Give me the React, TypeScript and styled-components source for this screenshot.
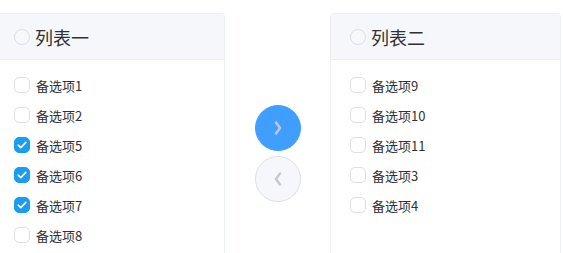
import styled, { createGlobalStyle } from "styled-components";

const GlobalStyle = createGlobalStyle`
  html, body {
    margin: 0;
    padding: 0;
    background: #ffffff;
    overflow: hidden;
  }
  body {
    font-family: "Noto Sans CJK SC", "Noto Sans", sans-serif;
  }
`;

const leftItems = [
  { label: "备选项1", checked: false },
  { label: "备选项2", checked: false },
  { label: "备选项5", checked: true },
  { label: "备选项6", checked: true },
  { label: "备选项7", checked: true },
  { label: "备选项8", checked: false },
];

const rightItems = [
  { label: "备选项9", checked: false },
  { label: "备选项10", checked: false },
  { label: "备选项11", checked: false },
  { label: "备选项3", checked: false },
  { label: "备选项4", checked: false },
];

function Panel({
  title,
  items,
}: {
  title: string;
  items: { label: string; checked: boolean }[];
}) {
  return (
    <StyledPanel>
      <StyledHeader>
        <Box $header />
        <StyledTitle>{title}</StyledTitle>
      </StyledHeader>
      <StyledList>
        {items.map((item) => (
          <StyledRow key={item.label}>
            <Box $checked={item.checked}>
              {item.checked && (
                <svg width="10" height="8" viewBox="0 0 10 8">
                  <path
                    d="M1.2 4.2 L3.8 6.6 L8.8 1.4"
                    fill="none"
                    stroke="#ffffff"
                    strokeWidth="1.6"
                    strokeLinecap="round"
                    strokeLinejoin="round"
                  />
                </svg>
              )}
            </Box>
            <StyledLabel>{item.label}</StyledLabel>
          </StyledRow>
        ))}
      </StyledList>
    </StyledPanel>
  );
}

function Chevron({ left }: { left?: boolean }) {
  return (
    <svg width="8" height="14" viewBox="0 0 8 14">
      <path
        d={left ? "M6 1.5 L2 7 L6 12.5" : "M2 1.5 L6 7 L2 12.5"}
        fill="none"
        stroke="#c3c8d0"
        strokeWidth="2.4"
        strokeLinecap="round"
        strokeLinejoin="round"
      />
    </svg>
  );
}

export default function App() {
  return (
    <>
      <GlobalStyle />
      <StyledTransfer>
        <Panel title="列表一" items={leftItems} />
        <StyledButtons>
          <StyledButton $primary>
            <Chevron />
          </StyledButton>
          <StyledButton>
            <Chevron left />
          </StyledButton>
        </StyledButtons>
        <Panel title="列表二" items={rightItems} />
      </StyledTransfer>
    </>
  );
}

const StyledTransfer = styled.div`
  display: flex;
  align-items: center;
  padding-top: 13px;
  margin-left: -6px;
`;

const StyledPanel = styled.div`
  width: 231px;
  height: 280px;
  box-sizing: border-box;
  border: 1px solid #ebeef5;
  border-radius: 4px;
  background: #ffffff;
  overflow: hidden;
  flex-shrink: 0;
`;

const StyledHeader = styled.div`
  display: flex;
  align-items: center;
  gap: 5px;
  height: 45px;
  padding-left: 19px;
  background: #f5f7fa;
  border-bottom: 1px solid #ebeef5;
`;

const StyledTitle = styled.span`
  font-size: 18px;
  color: #303133;
  line-height: 1;
`;

const StyledList = styled.div`
  display: flex;
  flex-direction: column;
  padding: 10px 0 0 19px;
`;

const StyledRow = styled.div`
  display: flex;
  align-items: center;
  gap: 6px;
  height: 30px;
`;

const Box = styled.span<{ $checked?: boolean; $header?: boolean }>`
  display: inline-flex;
  align-items: center;
  justify-content: center;
  width: 16px;
  height: 16px;
  box-sizing: border-box;
  border-radius: ${(p) => (p.$header ? "8px" : "5px")};
  border: 1px solid ${(p) => (p.$checked ? "#1a9df0" : "#dcdfe6")};
  background: ${(p) =>
    p.$checked ? "#1a9df0" : p.$header ? "#f7f8fa" : "#ffffff"};
  flex-shrink: 0;
`;

const StyledLabel = styled.span`
  font-size: 13px;
  color: #303133;
  line-height: 1;
`;

const StyledButtons = styled.div`
  display: flex;
  flex-direction: column;
  gap: 5px;
  margin: 0 29px 0 30px;
`;

const StyledButton = styled.button<{ $primary?: boolean }>`
  display: flex;
  align-items: center;
  justify-content: center;
  width: 46px;
  height: 46px;
  padding: 0;
  border-radius: 50%;
  border: 1px solid ${(p) => (p.$primary ? "#409eff" : "#dcdfe6")};
  background: ${(p) => (p.$primary ? "#409eff" : "#f5f7fa")};
  cursor: pointer;
`;
